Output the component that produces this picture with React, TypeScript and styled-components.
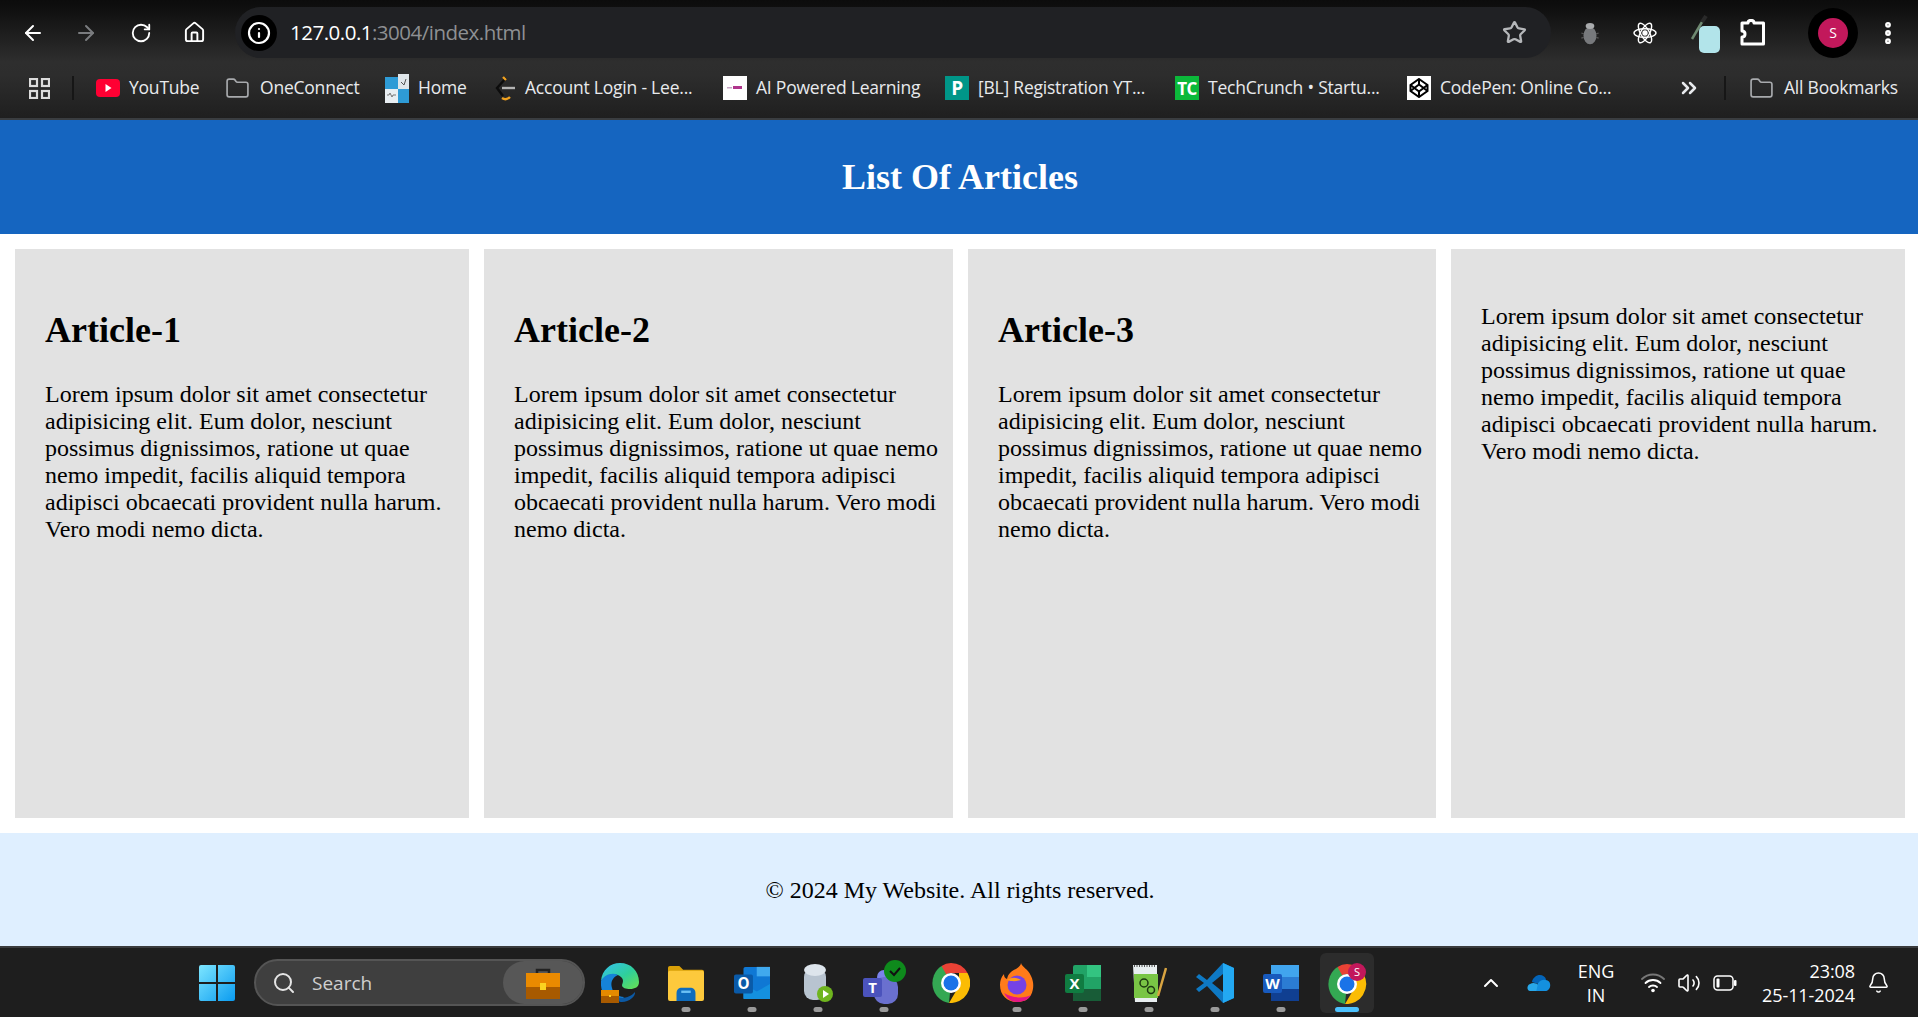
import styled, { createGlobalStyle } from "styled-components";
import {
  ArrowLeft,
  ArrowRight,
  RotateCw,
  Home,
  Info,
  Star,
  EllipsisVertical,
  ChevronsRight,
  Folder,
  Search,
  ChevronUp,
  Volume2,
  Bell,
} from "lucide-react";
import type { ReactNode } from "react";

const GlobalStyle = createGlobalStyle`
  html, body {
    margin: 0;
    padding: 0;
    height: 100%;
    overflow: hidden;
    background: #fff;
  }
  * { box-sizing: border-box; }
`;

const Screen = styled.div`
  display: flex;
  flex-direction: column;
  width: 1918px;
  height: 1017px;
  overflow: hidden;
`;

/* browser chrome */
const BrowserBar = styled.div`
  height: 120px;
  border-bottom: 2px solid #3a3d40;
  background: linear-gradient(#0c0c0c 0, #0f0f0f 8px, #2e2e2e 62px, #2d2d2d 75px, #1f1f1f 118px);
  font-family: "Open Sans", "Noto Sans", sans-serif;
  color: #e8eaed;
`;

const NavRow = styled.div`
  display: flex;
  align-items: center;
  height: 58px;
  padding-top: 7px;
  padding-left: 20px;
`;

const NavButton = styled.span<{ $w: number; $dim?: boolean; $ml?: number }>`
  display: flex;
  flex: none;
  justify-content: center;
  align-items: center;
  width: ${(p) => p.$w}px;
  margin-left: ${(p) => p.$ml || 0}px;
  color: ${(p) => (p.$dim ? "#7a7c7f" : "#fff")};
`;

const AddressBar = styled.div`
  display: flex;
  align-items: center;
  flex: none;
  width: 1316px;
  height: 51px;
  margin-left: 3px;
  margin-right: 11px;
  border-radius: 26px;
  background: #202124;
  padding-left: 6px;
  padding-right: 24px;
`;

const InfoBadge = styled.span`
  display: flex;
  justify-content: center;
  align-items: center;
  width: 36px;
  height: 36px;
  border-radius: 50%;
  background: #000;
  color: #fff;
`;

const Url = styled.div`
  flex: 1;
  margin-left: 13px;
  margin-top: -2px;
  font-size: 20.5px;
  letter-spacing: -0.5px;
  color: #fff;
  span {
    color: #8e9093;
  }
`;

const StarIcon = styled(Star)`
  color: #b5b7ba;
`;

const Avatar = styled.span`
  display: flex;
  justify-content: center;
  align-items: center;
  width: 50px;
  height: 50px;
  border-radius: 50%;
  background: #000;
  &::before {
    content: "S";
    display: flex;
    justify-content: center;
    align-items: center;
    width: 30px;
    height: 30px;
    border-radius: 50%;
    background: #c2185b;
    color: #fff;
    font-size: 14px;
  }
`;

const BookmarkRow = styled.div`
  display: flex;
  align-items: center;
  height: 60px;
  padding-left: 29px;
`;

const Divider = styled.span<{ $mx: number }>`
  width: 2px;
  height: 24px;
  background: #161616;
  margin: 0 ${(p) => p.$mx}px;
`;

const Bookmark = styled.div<{ $w: number }>`
  display: flex;
  align-items: center;
  gap: 9px;
  width: ${(p) => p.$w}px;
  font-size: 17.5px;
  letter-spacing: -0.22px;
  white-space: nowrap;
  span:last-child {
    margin-top: -2px;
  }
`;

const Favicon = styled.span<{ $bg: string; $fg?: string; $size?: number }>`
  display: flex;
  justify-content: center;
  align-items: center;
  flex: none;
  width: 24px;
  height: 24px;
  background: ${(p) => p.$bg};
  color: ${(p) => p.$fg || "#fff"};
  font-weight: 700;
  font-size: ${(p) => p.$size || 15}px;
  letter-spacing: -0.5px;
`;

const FolderIcon = styled(Folder)`
  flex: none;
  margin-right: 1px;
  color: #a8aaad;
`;

/* page content */
const Header = styled.header`
  display: flex;
  justify-content: center;
  align-items: center;
  height: 114px;
  padding-left: 2px;
  background: #1565c0;
  color: #fff;
  font-family: "Liberation Serif", "Times New Roman", serif;
`;

const PageTitle = styled.h1`
  margin: 0;
  font-size: 36px;
  font-weight: 700;
`;

const Articles = styled.main`
  display: grid;
  grid-template-columns: 454px 469px 468px 454px;
  gap: 15px;
  padding: 15px;
  height: 599px;
  font-family: "Liberation Serif", "Times New Roman", serif;
`;

const Card = styled.article`
  background: #e2e2e2;
  padding: 30px 12px 0 30px;
  font-size: 24px;
  line-height: 27px;
  color: #000;
`;

const CardTitle = styled.h2`
  margin: 31px 0 30px;
  font-size: 36px;
  line-height: 41px;
  font-weight: 700;
`;

const CardText = styled.p`
  margin: 24px 0;
  h2 + & {
    margin-top: 30px;
  }
`;

const Footer = styled.footer`
  display: flex;
  justify-content: center;
  align-items: center;
  height: 113px;
  padding: 1px 0 0 2px;
  background: #dfefff;
  font-family: "Liberation Serif", "Times New Roman", serif;
  font-size: 24px;
  color: #000;
`;

/* windows taskbar */
const Taskbar = styled.div`
  display: flex;
  align-items: center;
  height: 71px;
  padding-left: 199px;
  border-top: 2px solid #3a3b3d;
  background: #1e1e1e;
  font-family: "Open Sans", "Noto Sans", sans-serif;
  color: #fff;
`;

const SearchPill = styled.div`
  display: flex;
  align-items: center;
  width: 331px;
  height: 47px;
  margin-left: 19px;
  margin-right: 2px;
  padding-left: 16px;
  border: 2px solid #555;
  border-radius: 24px;
  background: #3f3f3f;
  font-size: 19px;
  color: #cfcfcf;
  gap: 16px;
`;

const PillBadge = styled.span`
  display: flex;
  justify-content: center;
  align-items: center;
  margin-left: auto;
  width: 80px;
  height: 43px;
  border-radius: 22px;
  background: #575757;
`;

const TaskItem = styled.div<{ $open?: boolean; $active?: boolean }>`
  position: relative;
  display: flex;
  justify-content: center;
  align-items: center;
  width: 66.1px;
  height: 60px;
  &::before {
    content: "";
    display: ${(p) => (p.$active ? "block" : "none")};
    position: absolute;
    top: 0;
    bottom: 0;
    left: 6px;
    right: 6px;
    border-radius: 6px;
    background: #2c2c2c;
  }
  &::after {
    content: "";
    display: ${(p) => (p.$open || p.$active ? "block" : "none")};
    position: absolute;
    bottom: 1px;
    left: 50%;
    transform: translateX(-50%);
    width: ${(p) => (p.$active ? 24 : 9)}px;
    height: 5px;
    border-radius: 3px;
    background: ${(p) => (p.$active ? "#4cc2ff" : "#9a9a9a")};
  }
  svg {
    position: relative;
    z-index: 1;
  }
`;

const Tray = styled.div`
  display: flex;
  align-items: center;
  margin-left: auto;
  padding-right: 17px;
  font-size: 18px;
  letter-spacing: -0.1px;
`;

const TraySlot = styled.span<{ $w: number }>`
  display: flex;
  justify-content: center;
  align-items: center;
  width: ${(p) => p.$w}px;
`;

const StackText = styled.div<{ $align: string; $w: number }>`
  width: ${(p) => p.$w}px;
  text-align: ${(p) => p.$align};
  line-height: 24px;
`;

const bookmarks: { label: string; w: number; icon: ReactNode }[] = [
  { label: "YouTube", w: 129, icon: <YouTubeIcon /> },
  { label: "OneConnect", w: 160, icon: <FolderIcon size={25} strokeWidth={1.6} /> },
  { label: "Home", w: 109, icon: <HomeFavicon /> },
  { label: "Account Login - Lee...", w: 229, icon: <LeetIcon /> },
  {
    label: "AI Powered Learning",
    w: 222,
    icon: (
      <Favicon $bg="#fff">
        <svg width="18" height="6">
          <rect x="1" y="2" width="5" height="1.500" fill="#c9a6c6" />
          <rect x="7" y="1" width="9" height="3" fill="#b0358c" />
        </svg>
      </Favicon>
    ),
  },
  { label: "[BL] Registration YT...", w: 230, icon: <Favicon $bg="#009688" $size={19}>P</Favicon> },
  { label: "TechCrunch • Startu...", w: 232, icon: <Favicon $bg="#0bb83a" $size={17}>TC</Favicon> },
  { label: "CodePen: Online Co...", w: 270, icon: <CodePenIcon /> },
];

function YouTubeIcon() {
  return (
    <svg width="24" height="18" viewBox="0 0 24 18">
      <rect width="24" height="18" rx="4" fill="#ff0033" />
      <path d="M9.500 5l6 4-6 4z" fill="#fff" />
    </svg>
  );
}

function HomeFavicon() {
  return (
    <svg width="24" height="29" viewBox="0 0 24 29">
      <rect y="3" width="13" height="12" fill="#2e9bd6" />
      <rect x="13" width="11" height="15" fill="#dfe6ea" />
      <path d="M16 8l3 3 2-6" fill="none" stroke="#555" strokeWidth="1" />
      <rect y="15" width="13" height="14" fill="#e8eef2" />
      <path d="M2 21h2l1-2 2 4 1-2h3" fill="none" stroke="#777" strokeWidth="1" />
      <rect x="13" y="15" width="11" height="14" fill="#2e9bd6" />
    </svg>
  );
}

function LeetIcon() {
  return (
    <svg width="22" height="28" viewBox="0 0 22 28" fill="none" strokeWidth="2.400">
      <path d="M12 4L3 14l6 8" stroke="#0c0c0c" />
      <path d="M9 3l3 3M8 24c3 2 6 1 8-1" stroke="#f0a11f" />
      <path d="M8 14h13" stroke="#b4b4b4" />
    </svg>
  );
}

function CodePenIcon() {
  return (
    <Favicon $bg="#fff">
      <svg width="20" height="20" viewBox="0 0 20 20" fill="none" stroke="#000" strokeWidth="2">
        <path d="M10 1l8.500 6v6L10 19l-8.500-6V7z" />
        <path d="M10 1v5.500M10 13.500V19M1.500 7L10 13.500 18.500 7M1.500 13L10 6.500l8.500 6.500" />
      </svg>
    </Favicon>
  );
}

function BugIcon() {
  return (
    <svg width="22" height="26" viewBox="0 0 24 30">
      <ellipse cx="12" cy="18" rx="7.500" ry="10" fill="#77797c" />
      <ellipse cx="12" cy="7" rx="5" ry="3.500" fill="#a9abad" />
      <path d="M2 15l3 1M2 21l3-1M22 15l-3 1M22 21l-3-1" stroke="#555" strokeWidth="1.500" />
    </svg>
  );
}

function ReactIcon() {
  return (
    <svg width="24" height="26" viewBox="-12 -12 24 24" fill="none" stroke="#fff" strokeWidth="1.400">
      <ellipse rx="11" ry="4.300" />
      <ellipse rx="11" ry="4.300" transform="rotate(60)" />
      <ellipse rx="11" ry="4.300" transform="rotate(120)" />
      <circle r="2" fill="#fff" />
    </svg>
  );
}

function DropperIcon() {
  return (
    <svg width="32" height="40" viewBox="0 0 32 40">
      <path d="M3 26L13 9" stroke="#6f8a72" strokeWidth="2.500" />
      <path d="M13 9l4-6" stroke="#2a2a2a" strokeWidth="4" />
      <rect x="10" y="13" width="21" height="27" rx="5" fill="#b2e4ea" />
    </svg>
  );
}

function PuzzleIcon() {
  return (
    <svg width="26" height="28" viewBox="0 0 26 28" fill="none" stroke="#fff" strokeWidth="3">
      <path d="M2 4h6c0-3.500 6-3.500 6 0h9.500v21H2v-7c4 0 4-6 0-6z" strokeLinejoin="round" />
    </svg>
  );
}

function WindowsLogo() {
  return (
    <svg width="36" height="36" viewBox="0 0 36 36">
      <defs>
        <linearGradient id="win" x1="0" y1="0" x2="1" y2="1">
          <stop offset="0" stopColor="#7ee6ff" />
          <stop offset="1" stopColor="#0a9bf0" />
        </linearGradient>
      </defs>
      <path d="M0 2a2 2 0 012-2h15v17H0zM19 0h15a2 2 0 012 2v15H19zM0 19h17v17H2a2 2 0 01-2-2zM19 19h17v15a2 2 0 01-2 2H19z" fill="url(#win)" />
    </svg>
  );
}

function Briefcase({ size = 34 }: { size?: number }) {
  return (
    <svg width={size} height={size} viewBox="0 0 34 34">
      <path d="M11 8V4h12v4" fill="none" stroke="#222" strokeWidth="2.500" />
      <rect y="7" width="34" height="14" fill="#ea8a00" />
      <rect y="21" width="34" height="12" fill="#a85a00" />
      <rect x="14" y="17" width="6" height="7" fill="#fbd320" />
    </svg>
  );
}

function EdgeIcon() {
  return (
    <svg width="38" height="40" viewBox="0 0 38 40">
      <defs>
        <linearGradient id="edge" x1="0" y1="0" x2="1" y2="1">
          <stop offset="0" stopColor="#35c1f1" />
          <stop offset="0.55" stopColor="#2fcf9a" />
          <stop offset="1" stopColor="#6ae04f" />
        </linearGradient>
      </defs>
      <path d="M0 18C1 7 9 0 19 0c11 0 19 8 19 19 0 5-4 7-9 7-4 0-8-1-8-4 1-3 2-5-1-8-5-5-15-3-20 4z" fill="url(#edge)" />
      <path d="M0 18c3-6 11-9 17-6-5 2-8 7-6 13 1 5 6 9 12 9-2 3-6 5-10 5C5 39-1 28 0 18z" fill="#1683d8" />
      <path d="M16 34c6 2 14 0 18-5 1 4-6 10-13 10-3 0-6-2-5-5z" fill="#0c59a4" />
      <rect y="27" width="18" height="13" fill="#a85a00" />
      <rect y="27" width="18" height="6" fill="#e58a00" />
      <rect x="8" y="32" width="2" height="2" fill="#fbd320" />
    </svg>
  );
}

function ExplorerIcon() {
  return (
    <svg width="36" height="38" viewBox="0 0 38 38">
      <path d="M0 3a2 2 0 012-2h10l4 4h20a2 2 0 012 2v4H0z" fill="#d9a008" />
      <rect y="6" width="38" height="32" rx="2" fill="#fdc93c" />
      <path d="M9 38V30c0-4 2-6 6-6h8c4 0 6 2 6 6v8z" fill="#0f6cbd" />
      <rect x="14" y="27" width="10" height="2.500" fill="#6cc1f5" />
    </svg>
  );
}

function OutlookIcon() {
  return (
    <svg width="36" height="38" viewBox="0 0 38 38">
      <rect x="10" y="2" width="28" height="34" rx="2" fill="#0f78d4" />
      <rect x="24" y="2" width="14" height="10" fill="#40a9ee" />
      <path d="M10 20l14 8 14-8v16H10z" fill="#1490df" />
      <rect y="10" width="20" height="20" rx="2" fill="#0a5aa8" />
      <text x="10" y="25" fontSize="16" fontWeight="700" fill="#fff" textAnchor="middle" fontFamily="Open Sans">O</text>
    </svg>
  );
}

function DbIcon() {
  return (
    <svg width="32" height="40" viewBox="0 0 32 40">
      <rect x="2" y="5" width="22" height="32" rx="9" fill="#b8c4d0" />
      <ellipse cx="13" cy="7" rx="11" ry="6" fill="#dde5ec" />
      <circle cx="23" cy="31" r="8" fill="#6fb51e" />
      <path d="M21 27l6 4-6 4z" fill="#fff" />
    </svg>
  );
}

function TeamsIcon() {
  return (
    <svg width="44" height="46" viewBox="0 0 44 46">
      <circle cx="22" cy="17" r="7" fill="#7b83eb" />
      <rect x="12" y="17" width="24" height="27" rx="10" fill="#6a70cf" />
      <rect x="1" y="18" width="19" height="19" rx="2" fill="#4b53bc" />
      <text x="10.500" y="33" fontSize="15" fontWeight="700" fill="#fff" textAnchor="middle" fontFamily="Open Sans">T</text>
      <circle cx="33" cy="11" r="11" fill="#0e8a1c" />
      <path d="M28 11l4 4 6-7" fill="none" stroke="#111" strokeWidth="2" />
    </svg>
  );
}

function ChromeMark() {
  return (
    <g>
      <path d="M0-20A19 20 0 0116.500-10H0a10 10 0 00-9 6L-9.500-17A19 20 0 010-20z" fill="#e94235" />
      <path d="M-9.500-17L0 0l-2 19.900A19 20 0 01-9.500-17z" fill="#34a853" />
      <path d="M16.500-10A19 20 0 01-2 19.900L8 3V-10z" fill="#fbbc04" />
      <circle r="10" fill="#fff" />
      <circle r="7.500" fill="#1a73e8" />
    </g>
  );
}

function ChromeIcon() {
  return (
    <svg width="38" height="40" viewBox="-19 -20 38 40">
      <ChromeMark />
    </svg>
  );
}

function ChromeProfileIcon() {
  return (
    <svg width="40" height="42" viewBox="-20 -22 40 42">
      <ChromeMark />
      <circle cx="10" cy="-12" r="9" fill="#c2185b" />
      <text x="10" y="-8" fontSize="11" fill="#fff" textAnchor="middle" fontFamily="Open Sans">S</text>
    </svg>
  );
}

function FirefoxIcon() {
  return (
    <svg width="36" height="40" viewBox="0 0 36 40">
      <path d="M18 39C8 39 1 32 1 22c0-4 1-8 4-11 0 3 1 4 3 5 1-5 4-8 9-10 3-2 5-4 5-6 1 4 7 6 10 13 3 6 3 13 0 19-3 5-8 7-14 7z" fill="#ff7b1a" />
      <path d="M5 30c3 6 8 9 13 9 6 0 11-2 14-7-5 3-18 4-27-2z" fill="#e31587" />
      <circle cx="18" cy="22" r="9.500" fill="#7542e5" />
      <path d="M8 17c4-3 10-3 14 0-3 1-8 2-14 0z" fill="#ff9a1a" />
    </svg>
  );
}

function ExcelIcon() {
  return (
    <svg width="36" height="38" viewBox="0 0 36 38">
      <rect x="8" y="1" width="28" height="36" rx="2" fill="#21a366" />
      <rect x="22" y="1" width="14" height="12" fill="#33c481" />
      <rect x="8" y="25" width="28" height="12" fill="#185c37" />
      <rect y="10" width="19" height="19" rx="2" fill="#107c41" />
      <text x="9.500" y="25" fontSize="15" fontWeight="700" fill="#fff" textAnchor="middle" fontFamily="Open Sans">X</text>
    </svg>
  );
}

function NotepadIcon() {
  return (
    <svg width="36" height="42" viewBox="0 0 36 42">
      <path d="M2 3h24v37H4z" fill="#e8eef0" />
      <path d="M3 4h22" stroke="#555" strokeWidth="2" strokeDasharray="1 1.500" />
      <rect x="3" y="12" width="24" height="24" fill="#79c545" />
      <circle cx="13" cy="21" r="4" fill="none" stroke="#1d3a12" strokeWidth="1.500" />
      <circle cx="20" cy="28" r="3.500" fill="none" stroke="#1d3a12" strokeWidth="1.500" />
      <path d="M27 34L35 6" stroke="#d9a441" strokeWidth="2.500" />
    </svg>
  );
}

function VsCodeIcon() {
  return (
    <svg width="38" height="42" viewBox="0 0 38 42">
      <path d="M27 1l11 5v30l-11 5L11 24 3 30 0 27l8-6-8-6 3-3 8 6z" fill="#0e79c4" />
      <path d="M27 1l11 5v30l-11 5z" fill="#23a9f2" />
      <path d="M27 12L16 21l11 9z" fill="#1e1e1e" />
    </svg>
  );
}

function WordIcon() {
  return (
    <svg width="36" height="38" viewBox="0 0 36 38">
      <rect x="8" y="1" width="28" height="36" rx="2" fill="#2b7cd3" />
      <rect x="8" y="1" width="28" height="12" fill="#41a5ee" />
      <rect x="8" y="25" width="28" height="12" fill="#103f91" />
      <rect y="10" width="19" height="19" rx="2" fill="#185abd" />
      <text x="9.500" y="25" fontSize="15" fontWeight="700" fill="#fff" textAnchor="middle" fontFamily="Open Sans">W</text>
    </svg>
  );
}

function OneDriveIcon() {
  return (
    <svg width="24" height="16" viewBox="0 0 26 18">
      <path d="M5 8c1-5 5-8 9-8 3 0 6 2 7 5l-6 6z" fill="#0364b8" />
      <path d="M3 18c-4 0-4-7 0-8 3-2 7-1 9 1l10 7z" fill="#28a8ea" />
      <path d="M12 9c3-4 7-4 10-3 5 1 5 11-1 12H10z" fill="#1490df" />
    </svg>
  );
}

function WifiIcon() {
  return (
    <svg width="24" height="20" viewBox="0 0 24 20" fill="none" strokeWidth="1.800" strokeLinecap="round">
      <path d="M1 6c6-6 16-6 22 0" stroke="#777" />
      <path d="M4.500 10c4-4 11-4 15 0M8 14c2-2 6-2 8 0" stroke="#fff" />
      <circle cx="12" cy="17.500" r="1.800" fill="#fff" />
    </svg>
  );
}

function BatteryIcon() {
  return (
    <svg width="24" height="16" viewBox="0 0 24 16">
      <rect x="1" y="1" width="19" height="14" rx="3.500" fill="none" stroke="#fff" strokeWidth="1.500" />
      <rect x="3.500" y="3.500" width="3" height="9" rx="1" fill="#fff" />
      <rect x="21" y="5" width="2.500" height="6" rx="1" fill="#fff" />
    </svg>
  );
}

const lorem =
  "Lorem ipsum dolor sit amet consectetur adipisicing elit. Eum dolor, nesciunt possimus dignissimos, ratione ut quae nemo impedit, facilis aliquid tempora adipisci obcaecati provident nulla harum. Vero modi nemo dicta.";

const taskApps: { icon: ReactNode; open?: boolean; active?: boolean }[] = [
  { icon: <EdgeIcon /> },
  { icon: <ExplorerIcon />, open: true },
  { icon: <OutlookIcon />, open: true },
  { icon: <DbIcon />, open: true },
  { icon: <TeamsIcon />, open: true },
  { icon: <ChromeIcon /> },
  { icon: <FirefoxIcon />, open: true },
  { icon: <ExcelIcon />, open: true },
  { icon: <NotepadIcon />, open: true },
  { icon: <VsCodeIcon />, open: true },
  { icon: <WordIcon />, open: true },
  { icon: <ChromeProfileIcon />, active: true },
];

export default function App() {
  return (
    <Screen>
      <GlobalStyle />
      <BrowserBar>
        <NavRow>
          <NavButton $w={26}><ArrowLeft size={24} /></NavButton>
          <NavButton $w={80} $dim><ArrowRight size={24} /></NavButton>
          <NavButton $w={30}><RotateCw size={22} /></NavButton>
          <NavButton $w={76}><Home size={23} /></NavButton>
          <AddressBar>
            <InfoBadge><Info size={24} strokeWidth={2.2} /></InfoBadge>
            <Url>127.0.0.1<span>:3004/index.html</span></Url>
            <StarIcon size={25} strokeWidth={2.2} />
          </AddressBar>
          <NavButton $w={56}><BugIcon /></NavButton>
          <NavButton $w={54}><ReactIcon /></NavButton>
          <NavButton $w={66}><DropperIcon /></NavButton>
          <NavButton $w={30}><PuzzleIcon /></NavButton>
          <NavButton $w={50} $ml={40}><Avatar /></NavButton>
          <NavButton $w={60}><EllipsisVertical size={28} strokeWidth={3} /></NavButton>
        </NavRow>
        <BookmarkRow>
          <svg width="21" height="21" viewBox="0 0 21 21" fill="none" stroke="#dcdcdc" strokeWidth="2.200">
            <rect x="1" y="1" width="7" height="7" />
            <rect x="13" y="1" width="7" height="7" />
            <rect x="1" y="13" width="7" height="7" />
            <rect x="13" y="13" width="7" height="7" />
          </svg>
          <Divider $mx={22} />
          {bookmarks.map((b) => (
            <Bookmark key={b.label} $w={b.w}>
              {b.icon}
              <span>{b.label}</span>
            </Bookmark>
          ))}
          <ChevronsRight size={24} strokeWidth={2.5} color="#e8eaed" />
          <Divider $mx={23} />
          <Bookmark $w={150}>
            <FolderIcon size={25} strokeWidth={1.6} />
            <span>All Bookmarks</span>
          </Bookmark>
        </BookmarkRow>
      </BrowserBar>

      <Header>
        <PageTitle>List Of Articles</PageTitle>
      </Header>

      <Articles>
        {["Article-1", "Article-2", "Article-3", null].map((title, i) => (
          <Card key={i}>
            {title && <CardTitle>{title}</CardTitle>}
            <CardText>{lorem}</CardText>
          </Card>
        ))}
      </Articles>

      <Footer>© 2024 My Website. All rights reserved.</Footer>

      <Taskbar>
        <WindowsLogo />
        <SearchPill>
          <Search size={24} strokeWidth={2} color="#e5e5e5" />
          <span>Search</span>
          <PillBadge><Briefcase /></PillBadge>
        </SearchPill>
        {taskApps.map((app, i) => (
          <TaskItem key={i} $open={app.open} $active={app.active}>
            {app.icon}
          </TaskItem>
        ))}
        <Tray>
          <TraySlot $w={56}><ChevronUp size={24} strokeWidth={2} /></TraySlot>
          <TraySlot $w={40}><OneDriveIcon /></TraySlot>
          <StackText $align="center" $w={74}>ENG<br />IN</StackText>
          <TraySlot $w={40}><WifiIcon /></TraySlot>
          <TraySlot $w={32}><Volume2 size={24} strokeWidth={1.6} /></TraySlot>
          <TraySlot $w={40}><BatteryIcon /></TraySlot>
          <StackText $align="right" $w={110}>23:08<br />25-11-2024</StackText>
          <TraySlot $w={46}><Bell size={23} strokeWidth={1.6} /></TraySlot>
        </Tray>
      </Taskbar>
    </Screen>
  );
}
